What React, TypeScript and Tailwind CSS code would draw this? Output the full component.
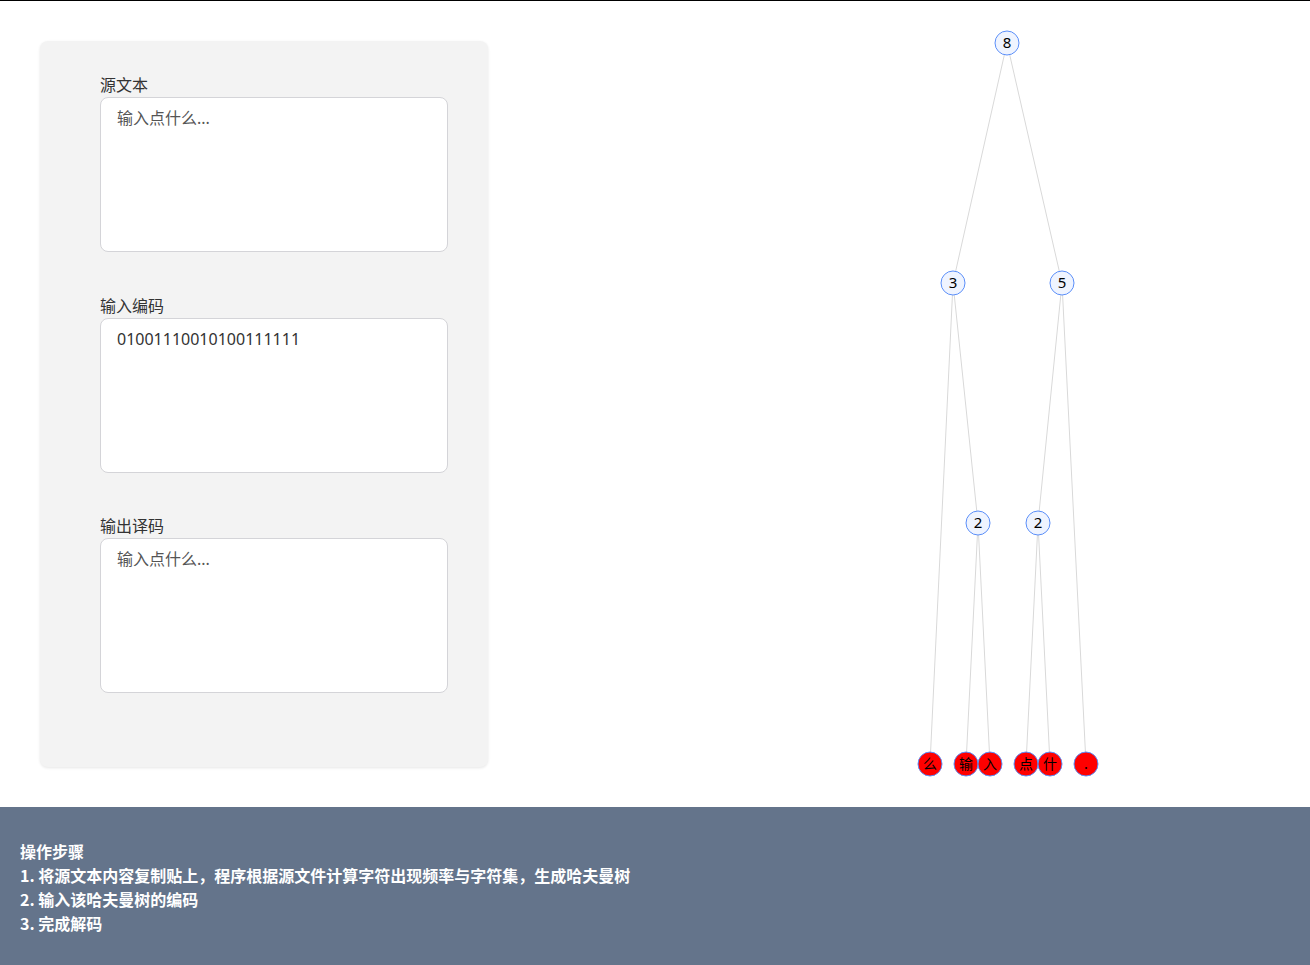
const internal = [
  { x: 479, y: 42, label: "8" },
  { x: 425, y: 282, label: "3" },
  { x: 534, y: 282, label: "5" },
  { x: 450, y: 522, label: "2" },
  { x: 510, y: 522, label: "2" },
];

const leaves = [
  { x: 402, y: 763, label: "么" },
  { x: 438, y: 763, label: "输" },
  { x: 462, y: 763, label: "入" },
  { x: 498, y: 763, label: "点" },
  { x: 522, y: 763, label: "什" },
  { x: 558, y: 763, label: "." },
];

// parent -> child, by position
const edges: [number, number, number, number][] = [
  [479, 42, 425, 282],
  [479, 42, 534, 282],
  [425, 282, 402, 763],
  [425, 282, 450, 522],
  [534, 282, 510, 522],
  [534, 282, 558, 763],
  [450, 522, 438, 763],
  [450, 522, 462, 763],
  [510, 522, 498, 763],
  [510, 522, 522, 763],
];

const fields = [
  { label: "源文本", value: "", placeholder: "输入点什么...", gap: "mb-[41px]" },
  { label: "输入编码", value: "01001110010100111111", placeholder: "输入点什么...", gap: "mb-[40px]" },
  { label: "输出译码", value: "", placeholder: "输入点什么...", gap: "" },
];

const HuffmanTree = () => (
  <svg width={782} height={806} className="block shrink-0">
    {edges.map(([x1, y1, x2, y2], i) => (
      <line key={i} x1={x1} y1={y1} x2={x2} y2={y2} stroke="#d9d9d9" strokeWidth={1} />
    ))}
    {internal.map((n, i) => (
      <g key={i}>
        <circle cx={n.x} cy={n.y} r={12} fill="#eff4ff" stroke="#5b8ff9" strokeWidth={1} />
        <text
          x={n.x}
          y={n.y + 1}
          textAnchor="middle"
          dominantBaseline="middle"
          fontSize={15}
          fill="#000"
          fontFamily="'Noto Sans', 'Noto Sans CJK SC', sans-serif"
        >
          {n.label}
        </text>
      </g>
    ))}
    {leaves.map((n, i) => (
      <g key={i}>
        <circle cx={n.x} cy={n.y} r={12} fill="#ff0000" stroke="#5b8ff9" strokeWidth={1} />
        <text
          x={n.x}
          y={n.y + 1}
          textAnchor="middle"
          dominantBaseline="middle"
          fontSize={14}
          fill="#000"
          fontFamily="'Noto Sans CJK SC', sans-serif"
        >
          {n.label}
        </text>
      </g>
    ))}
  </svg>
);

export default function App() {
  return (
    <div className="min-h-screen bg-white border-t border-black font-['Noto_Sans_CJK_SC',sans-serif]">
      <div className="flex">
        <div className="p-10 shrink-0">
          <div className="w-[448px] h-[726px] bg-[#f3f3f3] rounded-lg shadow-[0_1px_3px_rgba(0,0,0,0.1)] pt-[31px] pl-[60px]">
            {fields.map((f, i) => (
              <div key={i} className={f.gap}>
                <div className="text-base leading-6 pb-px text-[#333]">{f.label}</div>
                <textarea
                  className="block w-[348px] h-[155px] resize-none rounded-lg border border-[#d4d4d8] bg-white px-4 py-2 text-base leading-6 text-[#333] placeholder:text-[#555] outline-none font-['Noto_Sans','Noto_Sans_CJK_SC',sans-serif]"
                  placeholder={f.placeholder}
                  defaultValue={f.value}
                />
              </div>
            ))}
          </div>
        </div>
        <HuffmanTree />
      </div>
      <footer className="bg-[#64748b] px-5 py-8 text-white font-semibold text-base leading-6">
        <p>操作步骤</p>
        <p>1. 将源文本内容复制贴上，程序根据源文件计算字符出现频率与字符集，生成哈夫曼树</p>
        <p>2. 输入该哈夫曼树的编码</p>
        <p>3. 完成解码</p>
      </footer>
    </div>
  );
}
